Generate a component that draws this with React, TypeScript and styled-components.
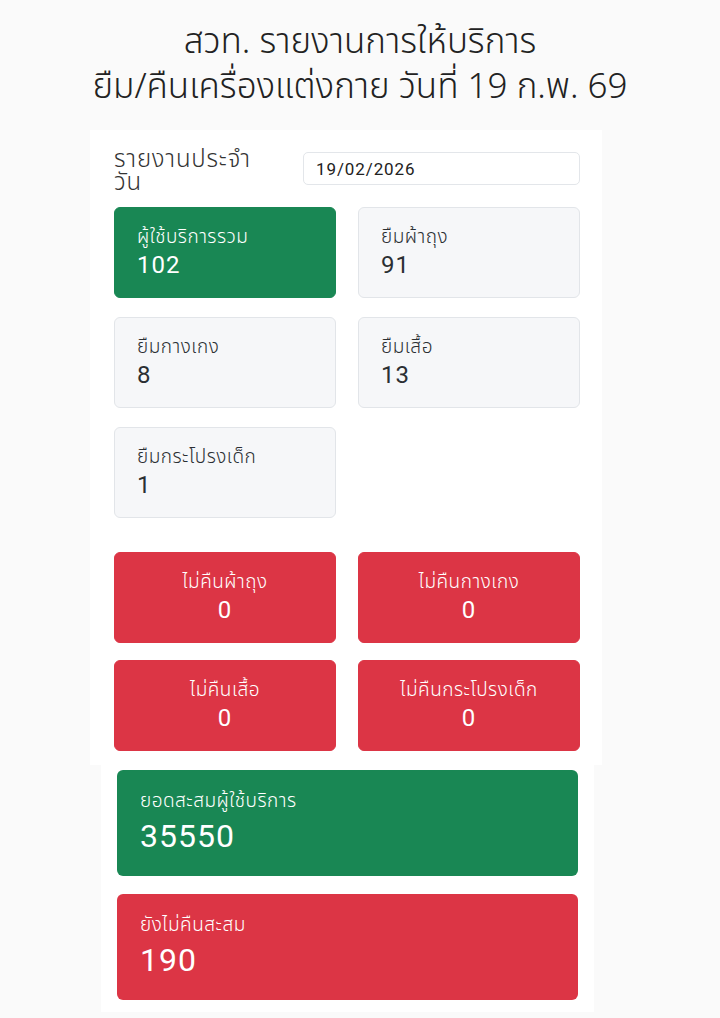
import React from "react";
import styled, { createGlobalStyle } from "styled-components";

const Global = createGlobalStyle`
  body {
    margin: 0;
    background: #fafafa;
    font-family: Roboto, "Noto Sans Thai", "Noto Sans", sans-serif;
    color: #212529;
  }
`;

const Page = styled.div`
  width: 720px;
  display: flex;
  flex-direction: column;
  align-items: center;
`;

const Title = styled.h1`
  margin: 20px 0 20px;
  font-family: "Noto Sans Thai", "Noto Sans", sans-serif;
  font-weight: 300;
  font-size: 35px;
  line-height: 45px;
  text-align: center;
  color: #222;
`;

const Panel = styled.section`
  width: 512px;
  box-sizing: border-box;
  background: #fff;
  padding: 18px 22px 14px 24px;
  align-self: flex-start;
  margin-left: 90px;
`;

const HeaderRow = styled.div`
  display: grid;
  grid-template-columns: 1fr 277px;
  align-items: start;
  margin-bottom: 13px;
`;

const Heading = styled.h2`
  margin: 0;
  font-size: 24px;
  font-weight: 350;
  line-height: 23px;
  width: 150px;
  letter-spacing: 0.8px;
  color: #333;
`;

const DateInput = styled.input`
  height: 33px;
  box-sizing: border-box;
  margin-top: 4px;
  border: 1px solid #e3e6ea;
  border-radius: 5px;
  padding: 0 12px;
  font-family: Roboto, sans-serif;
  font-size: 17px;
  letter-spacing: 0.9px;
  color: #222;
  background: #fff;
  outline: none;
`;

const Grid = styled.div<{ $gap: number }>`
  display: grid;
  grid-template-columns: 222px 222px;
  column-gap: 22px;
  row-gap: ${(p) => p.$gap}px;
`;

type Tone = "green" | "gray" | "red";

const tones: Record<Tone, { bg: string; fg: string; border: string }> = {
  green: { bg: "#198754", fg: "#fff", border: "#198754" },
  gray: { bg: "#f6f7f9", fg: "#2b2f33", border: "#e2e5e9" },
  red: { bg: "#dc3545", fg: "#fff", border: "#dc3545" },
};

const Card = styled.div<{ $tone: Tone; $center?: boolean }>`
  height: 91px;
  box-sizing: border-box;
  border-radius: 6px;
  background: ${(p) => tones[p.$tone].bg};
  color: ${(p) => tones[p.$tone].fg};
  border: 1px solid ${(p) => tones[p.$tone].border};
  padding: ${(p) => (p.$center ? "15px 10px" : "15px 22px")};
  text-align: ${(p) => (p.$center ? "center" : "left")};
  display: flex;
  flex-direction: column;
`;

const Label = styled.div`
  font-size: 19px;
  font-weight: 350;
  line-height: 28px;
  letter-spacing: 0.5px;
`;

const Value = styled.div`
  font-size: 24px;
  line-height: 28px;
  letter-spacing: 1px;
`;

const Spacer = styled.div`
  height: 34px;
`;

const TotalsPanel = styled.section`
  width: 493px;
  box-sizing: border-box;
  background: #fff;
  padding: 5px 16px 12px;
  align-self: flex-start;
  margin-left: 101px;
  display: flex;
  flex-direction: column;
  gap: 18px;
`;

const BigCard = styled.div<{ $tone: Tone }>`
  height: 106px;
  box-sizing: border-box;
  border-radius: 6px;
  background: ${(p) => tones[p.$tone].bg};
  color: #fff;
  padding: 16px 23px;
`;

const BigLabel = styled.div`
  font-size: 19px;
  font-weight: 350;
  line-height: 30px;
  letter-spacing: 0.5px;
`;

const BigValue = styled.div`
  font-size: 32px;
  line-height: 40px;
  letter-spacing: 1px;
`;

const borrowed: { label: string; value: number; tone: Tone }[] = [
  { label: "ผู้ใช้บริการรวม", value: 102, tone: "green" },
  { label: "ยืมผ้าถุง", value: 91, tone: "gray" },
  { label: "ยืมกางเกง", value: 8, tone: "gray" },
  { label: "ยืมเสื้อ", value: 13, tone: "gray" },
  { label: "ยืมกระโปรงเด็ก", value: 1, tone: "gray" },
];

const missing = [
  { label: "ไม่คืนผ้าถุง", value: 0 },
  { label: "ไม่คืนกางเกง", value: 0 },
  { label: "ไม่คืนเสื้อ", value: 0 },
  { label: "ไม่คืนกระโปรงเด็ก", value: 0 },
];

export default function App() {
  return (
    <Page>
      <Global />
      <Title>
        สวท. รายงานการให้บริการ
        <br />
        ยืม/คืนเครื่องแต่งกาย วันที่ 19 ก.พ. 69
      </Title>
      <Panel>
        <HeaderRow>
          <Heading>รายงานประจำวัน</Heading>
          <DateInput type="text" defaultValue="19/02/2026" />
        </HeaderRow>
        <Grid $gap={19}>
          {borrowed.map((b) => (
            <Card key={b.label} $tone={b.tone}>
              <Label>{b.label}</Label>
              <Value>{b.value}</Value>
            </Card>
          ))}
        </Grid>
        <Spacer />
        <Grid $gap={17}>
          {missing.map((m) => (
            <Card key={m.label} $tone="red" $center>
              <Label>{m.label}</Label>
              <Value>{m.value}</Value>
            </Card>
          ))}
        </Grid>
      </Panel>
      <TotalsPanel>
        <BigCard $tone="green">
          <BigLabel>ยอดสะสมผู้ใช้บริการ</BigLabel>
          <BigValue>35550</BigValue>
        </BigCard>
        <BigCard $tone="red">
          <BigLabel>ยังไม่คืนสะสม</BigLabel>
          <BigValue>190</BigValue>
        </BigCard>
      </TotalsPanel>
    </Page>
  );
}
